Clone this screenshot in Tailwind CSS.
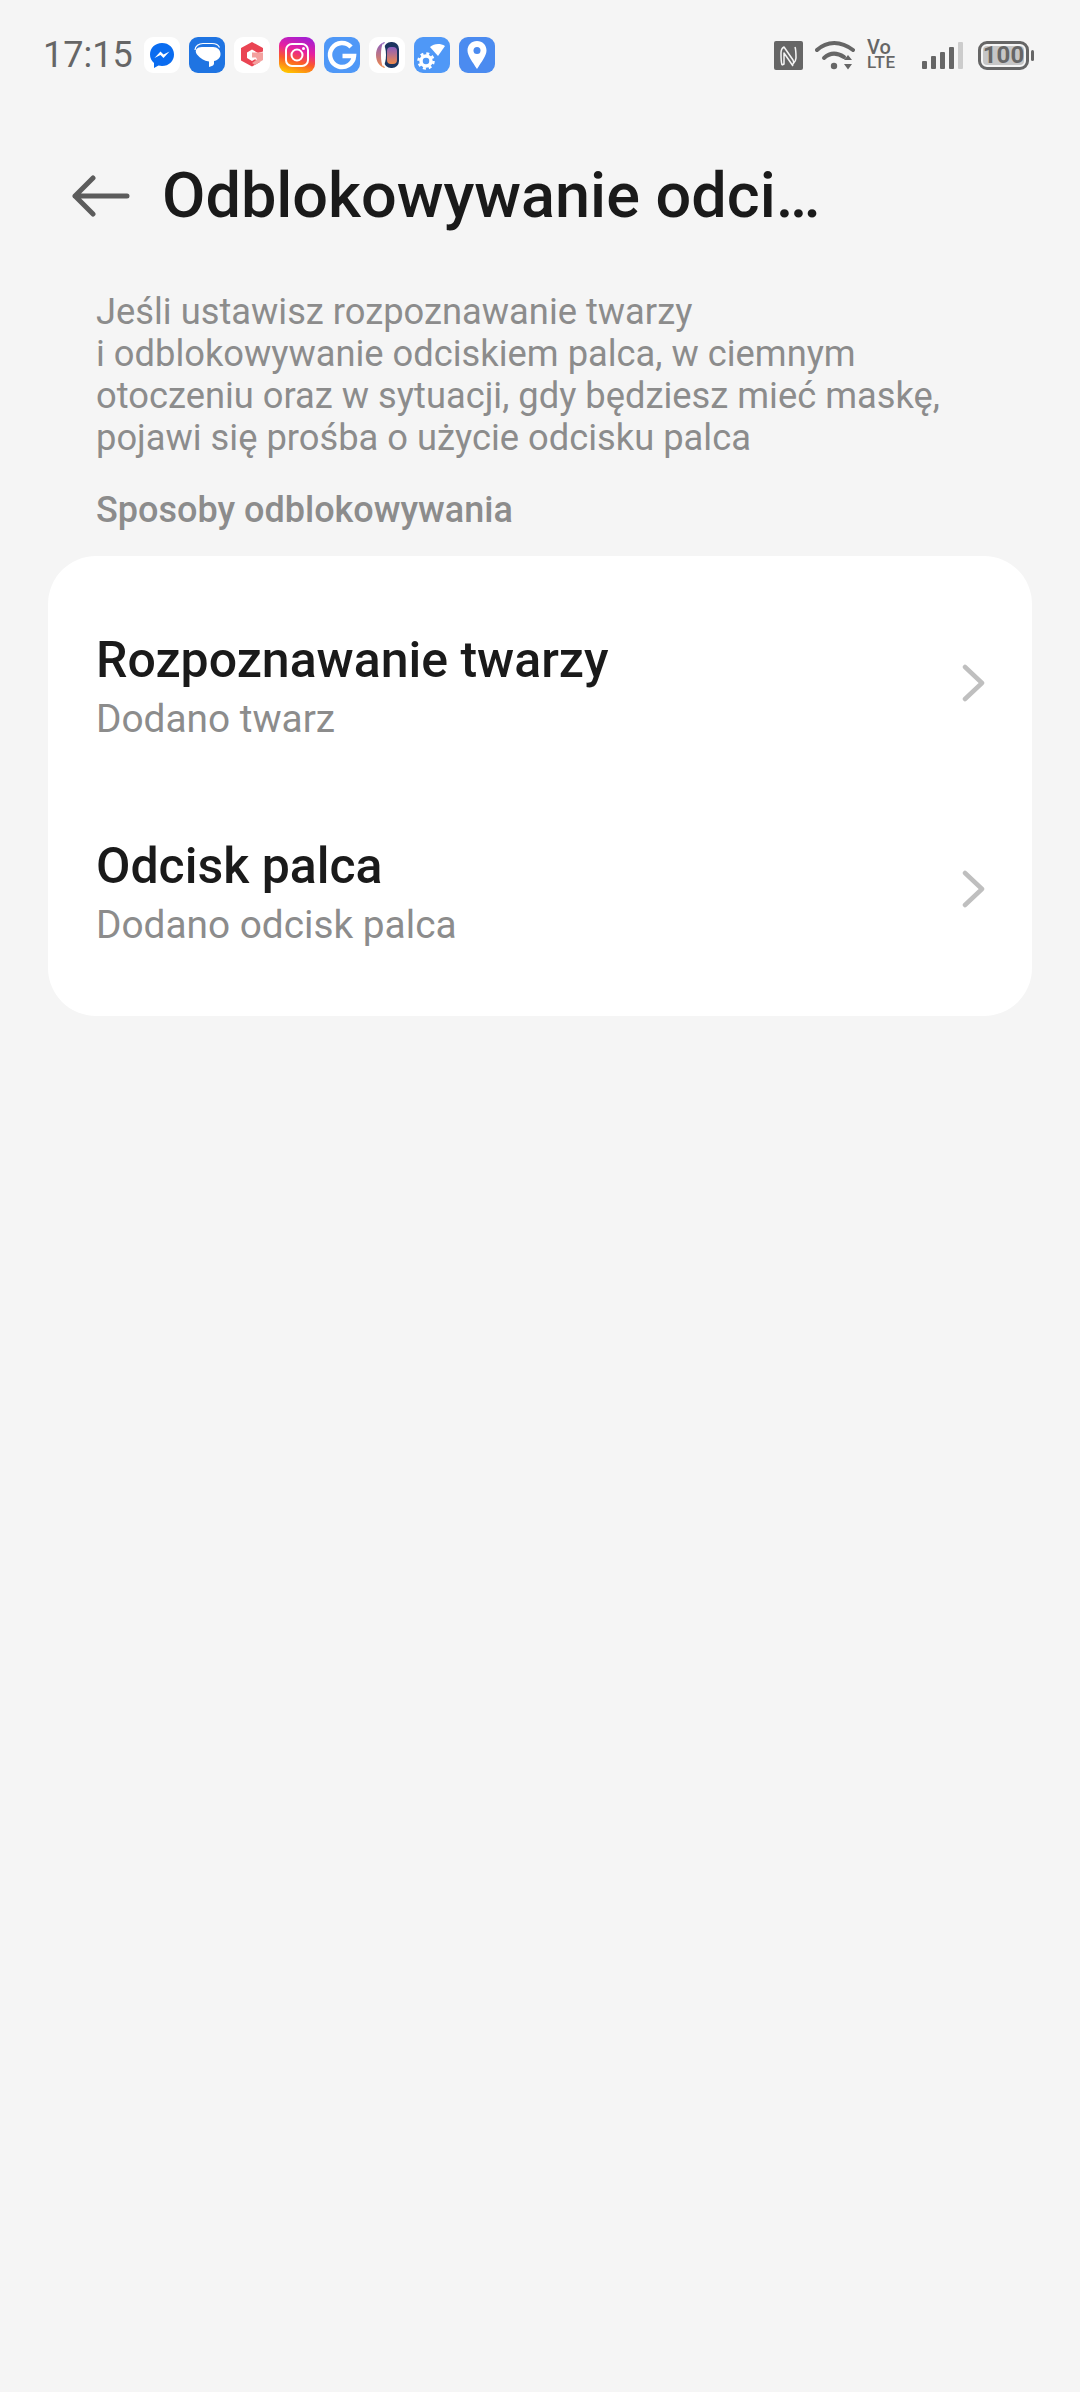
<!DOCTYPE html>
<html lang="pl">
<head>
    <meta charset="UTF-8">
    <meta name="viewport" content="width=device-width, initial-scale=1.0">
    <title>Odblokowywanie odciskiem palca</title>
    <script src="https://cdn.jsdelivr.net/npm/@tailwindcss/browser@4"></script>
</head>
<body class="bg-[#f5f5f5] w-[1080px] h-[2392px] overflow-hidden font-['Roboto',sans-serif]">
    <!-- status bar -->
    <div class="h-[110px] pl-[43px] pr-[46px] flex items-center justify-between">
        <div class="flex items-center">
            <span class="text-[36px] leading-[36px] text-[#666666] w-[101px]">17:15</span>
            <div class="flex gap-[9px]">
                <!-- messenger -->
                <svg class="w-[36px] h-[36px]" viewBox="0 0 36 36"><rect width="36" height="36" rx="9" fill="#fff"/><path d="M18 6C11 6 6 11 6 17.500c0 3.500 1.500 6.500 4 8.500v5l4.500-2.400c1.100.3 2.300.4 3.500.4 7 0 12-4.900 12-11.500S25 6 18 6z" fill="#0a6cf0"/><path d="M10.500 21l6-6.500 3 3 6-3-6 6.500-3-3z" fill="#fff"/></svg>
                <!-- messages -->
                <svg class="w-[36px] h-[36px]" viewBox="0 0 36 36"><rect width="36" height="36" rx="9" fill="#1f74e2"/><path d="M13 10h11c4.500 0 7.500 3 7.500 7s-3 6.500-6.500 7v2.500c0 1.500-1.500 2.500-3.500 3l-1.500.5v-5.500c-5-.5-8.500-3-12-7C5 13 8 10 13 10z" fill="#fff"/><path d="M6 13c0-4 4-6.500 8-6.500h9c4 0 6.500 1.500 7.500 4" fill="none" stroke="#fff" stroke-width="1.200"/></svg>
                <!-- red hexagon -->
                <svg class="w-[36px] h-[36px]" viewBox="0 0 36 36"><rect width="36" height="36" rx="9" fill="#fff"/><path d="M18 5l11 6v3.500l-5 1.500-6-3.500-5 3v5.500l5 3 3-1.800 5 2.800-8 4.500-11-6V11z" fill="#ea4453"/><path d="M18 15.500h11v7.500l-8 5-3-2 5-3.500-1-2h-4z" fill="#f3a19f"/></svg>
                <!-- instagram -->
                <svg class="w-[36px] h-[36px]" viewBox="0 0 36 36">
                    <defs><linearGradient id="ig" x1="0.3" y1="1" x2="0.6" y2="0"><stop offset="0" stop-color="#ffc400"/><stop offset="0.35" stop-color="#fb5a2a"/><stop offset="0.65" stop-color="#e71fa0"/><stop offset="1" stop-color="#a81fd0"/></linearGradient></defs>
                    <rect width="36" height="36" rx="9" fill="url(#ig)"/><rect x="7" y="7" width="22" height="22" rx="6" fill="none" stroke="#fff" stroke-width="2"/><circle cx="18" cy="18" r="5.500" fill="none" stroke="#fff" stroke-width="2"/><circle cx="24.500" cy="11.500" r="1.500" fill="#fff"/>
                </svg>
                <!-- google -->
                <svg class="w-[36px] h-[36px]" viewBox="0 0 36 36"><rect width="36" height="36" rx="9" fill="#4f98f7"/><path d="M27 10A12 12 0 1 0 30 19H18.500" fill="none" stroke="#fff" stroke-width="4.500"/></svg>
                <!-- watch -->
                <svg class="w-[36px] h-[36px]" viewBox="0 0 36 36">
                    <defs><linearGradient id="wt" x1="0" y1="0" x2="0" y2="1"><stop offset="0" stop-color="#8a5fc0"/><stop offset="1" stop-color="#f08a4a"/></linearGradient></defs>
                    <rect width="36" height="36" rx="9" fill="#fff"/><path d="M16 5c-5 1-9 6-9 13s4 12 9 13c-2-3-3-8-3-13s1-10 3-13z" fill="url(#wt)"/><rect x="15" y="5" width="15" height="26" rx="7" fill="#1c3560"/><path d="M14 6c2 3 3 7 3 12s-1 9-3 12c-1.500-3-2-7-2-12s.5-9 2-12z" fill="#fff"/><rect x="18" y="10" width="10" height="17" rx="4" fill="url(#wt)"/>
                </svg>
                <!-- wifi settings -->
                <svg class="w-[36px] h-[36px]" viewBox="0 0 36 36"><rect width="36" height="36" rx="9" fill="#4f98f7"/><path d="M16 10c4-3.500 10-4 15-1l-7 10z" fill="#fff"/><circle cx="12" cy="24" r="5" fill="none" stroke="#fff" stroke-width="3.500"/><circle cx="12" cy="24" r="7.500" fill="none" stroke="#fff" stroke-width="2.500" stroke-dasharray="3 2.900"/></svg>
                <!-- map pin -->
                <svg class="w-[36px] h-[36px]" viewBox="0 0 36 36"><rect width="36" height="36" rx="9" fill="#4b8bf0"/><path d="M18 4c-5.500 0-9.500 4-9.500 9.500 0 5 5 11.500 9.500 18.500 4.500-7 9.500-13.500 9.500-18.500C27.500 8 23.500 4 18 4z" fill="#fff"/><circle cx="18" cy="13.500" r="3.500" fill="#4b8bf0"/></svg>
            </div>
        </div>
        <div class="flex items-center">
            <!-- nfc -->
            <svg class="w-[29px] h-[29px]" viewBox="0 0 29 29"><rect width="29" height="29" rx="2" fill="#666"/><path d="M8 24c-1-3-1-7-1-12 0-3 1-5 3-6l9 13c1 2 1 3 0 4 1-1 3-3 3-6 0-5 0-8-1-11M8 24l2-1V12l9 13" fill="none" stroke="#f5f5f5" stroke-width="1.500" stroke-linejoin="round"/></svg>
            <!-- wifi -->
            <svg class="w-[40px] h-[30px] ml-[12px]" viewBox="0 0 40 30"><path d="M2 10c10-9.500 24-9.500 36 0" fill="none" stroke="#666" stroke-width="4" stroke-linecap="round"/><path d="M9 18c6-5.500 13-5.500 20-1" fill="none" stroke="#666" stroke-width="4" stroke-linecap="round"/><circle cx="19" cy="26" r="3.200" fill="#666"/><path d="M29 20h8l-4-5zM29 24h8l-4 5.500z" fill="#666"/></svg>
            <!-- volte -->
            <div class="ml-[12px] w-[30px] flex flex-col text-[#666666] font-medium">
                <span class="text-[20px] leading-[15px]">Vo</span>
                <span class="text-[17px] leading-[15px] tracking-[0.5px]">LTE</span>
            </div>
            <!-- signal -->
            <div class="ml-[25px] mt-[1px] h-[27px] flex items-end gap-[4px]">
                <div class="w-[5px] h-[8px] rounded-[1px] bg-[#666666]"></div>
                <div class="w-[5px] h-[13px] rounded-[1px] bg-[#666666]"></div>
                <div class="w-[5px] h-[17px] rounded-[1px] bg-[#666666]"></div>
                <div class="w-[5px] h-[22px] rounded-[1px] bg-[#666666]"></div>
                <div class="w-[5px] h-[27px] rounded-[1px] bg-[#cccccc]"></div>
            </div>
            <!-- battery -->
            <div class="ml-[15px] w-[51px] h-[29px] rounded-[9px] border-[3px] border-[#666666] relative flex items-center justify-center bg-[#f5f5f5]">
                <div class="absolute inset-[2px] rounded-[4px] bg-[#c6c6c6]"></div>
                <span class="relative text-[24px] leading-[24px] font-bold text-[#666666]">100</span>
            </div>
            <div class="ml-[2px] w-[3px] h-[11px] rounded-[2px] bg-[#666666]"></div>
        </div>
    </div>

    <!-- header -->
    <div class="h-[86px] mt-[43px] flex items-center pl-[72px]">
        <svg class="w-[58px] h-[44px]" viewBox="0 0 58 44"><path d="M55 22H3M21 4L3 22l18 18" fill="none" stroke="#5c5c5c" stroke-width="5" stroke-linecap="round" stroke-linejoin="round"/></svg>
        <h1 class="ml-[32px] text-[63px] leading-[86px] font-medium text-[#1a1a1a] whitespace-nowrap">Odblokowywanie odci…</h1>
    </div>

    <!-- description -->
    <div class="pl-[96px] pr-[40px] pt-[52px]">
        <p class="text-[36.3px] leading-[42px] text-[#8c8c8c]">Jeśli ustawisz rozpoznawanie twarzy<br>i odblokowywanie odciskiem palca, w ciemnym<br>otoczeniu oraz w sytuacji, gdy będziesz mieć maskę,<br>pojawi się prośba o użycie odcisku palca</p>
        <p class="mt-[30px] text-[36px] leading-[42px] font-medium text-[#8c8c8c]">Sposoby odblokowywania</p>
    </div>

    <!-- card -->
    <div class="mx-[48px] mt-[25px] h-[460px] bg-white rounded-[48px] py-[24px] flex flex-col">
        <div class="h-[206px] pl-[48px] pr-[46px] flex items-center justify-between">
            <div class="mt-[9px]">
                <div class="text-[50px] leading-[62px] font-medium text-[#1a1a1a]">Rozpoznawanie twarzy</div>
                <div class="text-[38.8px] leading-[56px] text-[#8c8c8c]">Dodano twarz</div>
            </div>
            <svg class="w-[24px] h-[38px]" viewBox="0 0 24 38"><path d="M3 3l17 16L3 35" fill="none" stroke="#bfbfbf" stroke-width="4.500" stroke-linecap="round" stroke-linejoin="round"/></svg>
        </div>
        <div class="h-[206px] pl-[48px] pr-[46px] flex items-center justify-between">
            <div class="mt-[9px]">
                <div class="text-[50px] leading-[62px] font-medium text-[#1a1a1a]">Odcisk palca</div>
                <div class="text-[38.8px] leading-[56px] text-[#8c8c8c]">Dodano odcisk palca</div>
            </div>
            <svg class="w-[24px] h-[38px]" viewBox="0 0 24 38"><path d="M3 3l17 16L3 35" fill="none" stroke="#bfbfbf" stroke-width="4.500" stroke-linecap="round" stroke-linejoin="round"/></svg>
        </div>
    </div>
</body>
</html>
